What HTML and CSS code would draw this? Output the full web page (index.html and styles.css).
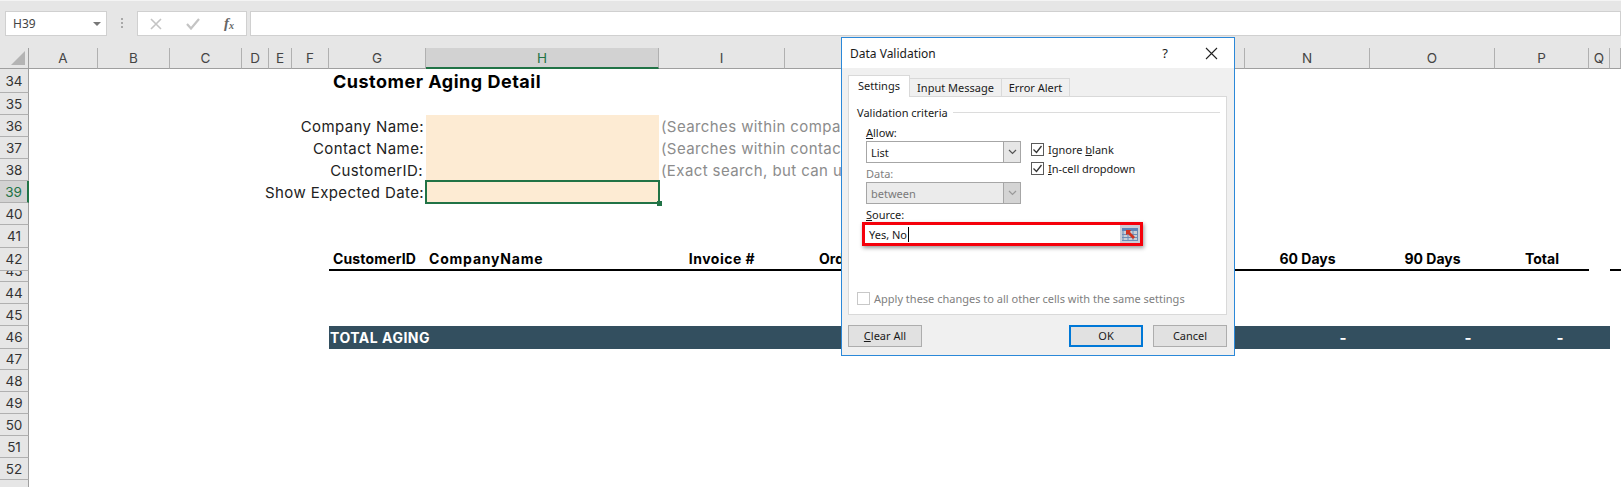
FILE: index.html
```html
<!DOCTYPE html>
<html lang="en">

<head>
    <meta charset="UTF-8">
    <title>Customer Aging Detail</title>
    <link rel="stylesheet" href="styles.css">
</head>

<body>
    <div class="app">
        <div class="formulaBar">
            <div class="nameBox">H39<span class="nameArrow"></span></div>
            <div class="grip"></div>
            <div class="fxBox">
                <svg class="fxIcon" width="12" height="12" viewBox="0 0 12 12"><path d="M1 1 L11 11 M11 1 L1 11" stroke="#c4c4c4" stroke-width="1.6" fill="none" /></svg>
                <svg class="fxIcon" width="14" height="12" viewBox="0 0 14 12"><path d="M1 6 L5 10.5 L13 1" stroke="#c4c4c4" stroke-width="2.2" fill="none" /></svg>
                <span class="fxText">f<sub>x</sub></span>
            </div>
            <div class="formulaInput"></div>
        </div>

        <div class="sheet">
            <div class="corner"><svg width="14" height="14" viewBox="0 0 14 14"><path d="M14 0 V14 H0 Z" fill="#b4b4b4" /></svg></div>
            <div class="ch">A</div>
            <div class="ch">B</div>
            <div class="ch">C</div>
            <div class="ch">D</div>
            <div class="ch">E</div>
            <div class="ch">F</div>
            <div class="ch">G</div>
            <div class="ch chActive">H</div>
            <div class="ch">I</div>
            <div class="ch"></div>
            <div class="ch"></div>
            <div class="ch"></div>
            <div class="ch"></div>
            <div class="ch">N</div>
            <div class="ch">O</div>
            <div class="ch">P</div>
            <div class="ch">Q</div>
            <div class="ch"></div>

            <div class="rh">34</div>
            <div class="rh">35</div>
            <div class="rh">36</div>
            <div class="rh">37</div>
            <div class="rh">38</div>
            <div class="rh rhActive">39</div>
            <div class="rh">40</div>
            <div class="rh">41</div>
            <div class="rh">42</div>
            <div class="rh rhShort">43</div>
            <div class="rh">44</div>
            <div class="rh">45</div>
            <div class="rh">46</div>
            <div class="rh">47</div>
            <div class="rh">48</div>
            <div class="rh">49</div>
            <div class="rh">50</div>
            <div class="rh">51</div>
            <div class="rh">52</div>
            <div class="rh rhLast"></div>

            <div class="title">Customer Aging Detail</div>

            <div class="label row36">Company Name:</div>
            <div class="label row37">Contact Name:</div>
            <div class="label row38 labelId">CustomerID:</div>
            <div class="label row39">Show Expected Date:</div>

            <div class="entry row36"></div>
            <div class="entry row37"></div>
            <div class="entry row38"></div>
            <div class="entry row39 selected"></div>

            <div class="hint row36">(Searches within company</div>
            <div class="hint row37">(Searches within contact</div>
            <div class="hint row38">(Exact search, but can use</div>

            <div class="rule ruleMain"></div>
            <div class="rule ruleEnd"></div>
            <div class="th colG">CustomerID</div>
            <div class="th colH">CompanyName</div>
            <div class="th colI center">Invoice #</div>
            <div class="th colJ">Order Date</div>
            <div class="th colN center">60 Days</div>
            <div class="th colO center">90 Days</div>
            <div class="th colP center">Total</div>

            <div class="totalBar">TOTAL AGING</div>
            <div class="dash colN">-</div>
            <div class="dash colO">-</div>
            <div class="dash colP">-</div>
        </div>

        <div class="dialog">
            <div class="dialogTitle">
                <span class="dialogName">Data Validation</span>
                <span class="help">?</span>
                <svg class="close" width="13" height="13" viewBox="0 0 13 13"><path d="M1 1 L12 12 M12 1 L1 12" stroke="#222" stroke-width="1.1" fill="none" /></svg>
            </div>
            <div class="dialogBody">
                <div class="tabs">
                    <div class="tab tabActive">Settings</div>
                    <div class="tab tabInput">Input Message</div>
                    <div class="tab tabError">Error Alert</div>
                </div>
                <div class="panel">
                    <div class="group"><span>Validation criteria</span><i></i></div>
                    <div class="allowRow">
                        <div class="allowCol">
                            <div class="fieldLabel"><u>A</u>llow:</div>
                            <div class="combo">
                                <span>List</span>
                                <b class="comboBtn"><svg width="9" height="6" viewBox="0 0 9 6"><path d="M1 1 L4.5 4.5 L8 1" stroke="#555" stroke-width="1.2" fill="none" /></svg></b>
                            </div>
                            <div class="fieldLabel muted dataLabel">Data:</div>
                            <div class="combo comboOff">
                                <span>between</span>
                                <b class="comboBtn"><svg width="9" height="6" viewBox="0 0 9 6"><path d="M1 1 L4.5 4.5 L8 1" stroke="#999" stroke-width="1.2" fill="none" /></svg></b>
                            </div>
                        </div>
                        <div class="checks">
                            <div class="check"><span class="box"><svg width="11" height="11" viewBox="0 0 11 11"><path d="M1.5 5.5 L4.5 8.5 L9.5 2" stroke="#333" stroke-width="1.3" fill="none" /></svg></span><span>Ignore <u>b</u>lank</span></div>
                            <div class="check"><span class="box"><svg width="11" height="11" viewBox="0 0 11 11"><path d="M1.5 5.5 L4.5 8.5 L9.5 2" stroke="#333" stroke-width="1.3" fill="none" /></svg></span><span><u>I</u>n-cell dropdown</span></div>
                        </div>
                    </div>
                    <div class="fieldLabel sourceLabel"><u>S</u>ource:</div>
                    <div class="redBox">
                        <div class="sourceInput">
                            <span class="sourceText">Yes, No</span>
                            <b class="rangeBtn">
                                <svg width="16" height="13" viewBox="0 0 16 13">
                                    <path d="M0 0 H16 V3 H0 Z" fill="#5f86b8" />
                                    <path d="M0 6.5 H16 M0 9.5 H16 M0 12.5 H16 M1 3 V13 M6 3 V13 M11 3 V13 M15.5 3 V13" stroke="#6d8db5" stroke-width="1" fill="none" />
                                    <path d="M4 2 L9 2 L8 4 L13 9 L11 11 L6 6 L4 7 Z" fill="#d1331f" />
                                </svg>
                            </b>
                        </div>
                    </div>
                    <div class="check applyCheck"><span class="box boxOff"></span><span>Apply these changes to all other cells with the same settings</span></div>
                </div>
                <div class="buttons">
                    <div class="btn"><u>C</u>lear All</div>
                    <div class="btn btnOk">OK</div>
                    <div class="btn">Cancel</div>
                </div>
            </div>
        </div>
    </div>
</body>

</html>
```

FILE: styles.css
```css
:root {
    --headerBg: #e6e6e6;
    --headerLine: #b0b0b0;
    --green: #217346;
    --navy: #334f5f;
    --sheetFont: Inter, 'Liberation Sans', sans-serif;
    --dialogFont: 'Noto Sans', 'Liberation Sans', sans-serif;
}

html,
body {
    margin: 0;
    background-color: #ffffff;
}

.app {
    position: relative;
    width: 1621px;
    height: 487px;
    overflow: hidden;
}

/* formula bar */
.formulaBar {
    display: flex;
    box-sizing: border-box;
    height: 48px;
    padding: 10px 0 12px 5px;
    background-color: var(--headerBg);
    border-top: 1px solid #f4f4f4;
}

.nameBox,
.fxBox,
.formulaInput {
    box-sizing: border-box;
    height: 25px;
    background-color: #ffffff;
    border: 1px solid #d0d0d0;
}

.nameBox {
    display: flex;
    align-items: center;
    justify-content: space-between;
    width: 102px;
    padding: 0 5px 0 7px;
    font: 12px var(--dialogFont);
    color: #444444;
}

.nameArrow {
    width: 0;
    height: 0;
    border-left: 4px solid transparent;
    border-right: 4px solid transparent;
    border-top: 4px solid #777777;
}

.grip {
    width: 2px;
    height: 12px;
    margin: 7px 14px 0 14px;
    background-image: linear-gradient(#a8a8a8 50%, transparent 50%);
    background-size: 2px 4px;
}

.fxBox {
    display: flex;
    align-items: center;
    width: 110px;
    padding: 0 12px;
    gap: 24px;
}

.fxText {
    font: italic bold 15px 'Liberation Serif', serif;
    color: #666666;
}

.fxText sub {
    font-size: 10px;
    vertical-align: -1px;
    line-height: 0;
}

.formulaInput {
    flex: 1;
    margin-left: 3px;
}

/* grid */
.sheet {
    display: grid;
    grid-template-columns: 29px 69px 72px 72px 27px 23px 37px 97px 233px 126px 115px 115px 115px 115px 125px 125px 94px 21px 11px;
    grid-template-rows: 21px 24px 22px 22px 22px 22px 22px 22px 23px 23px 11px 22px 22px 23px 21px 22px 22px 22px 22px 22px 22px;
    height: 439px;
    font-family: var(--sheetFont);
    font-size: 15px;
    letter-spacing: 0.4px;
    color: #222222;
}

.corner {
    grid-area: 1 / 1;
    display: flex;
    justify-content: flex-end;
    padding: 3px 3px 0 0;
    background-color: var(--headerBg);
    border-bottom: 1px solid #9f9f9f;
    border-right: 1px solid #9f9f9f;
}

.ch {
    grid-row: 1;
    display: flex;
    align-items: center;
    justify-content: center;
    box-sizing: border-box;
    background-color: var(--headerBg);
    border-bottom: 1px solid #9f9f9f;
    border-right: 1px solid var(--headerLine);
    font-size: 13.5px;
    letter-spacing: 0;
    color: #444444;
}

.chActive {
    background-color: #d2d2d2;
    border-bottom: 2px solid var(--green);
    color: var(--green);
}

.rh {
    grid-column: 1;
    display: flex;
    align-items: center;
    justify-content: center;
    overflow: hidden;
    box-sizing: border-box;
    background-color: var(--headerBg);
    border-bottom: 1px solid var(--headerLine);
    border-right: 1px solid #9f9f9f;
    font-size: 13.5px;
    letter-spacing: 0;
    color: #333333;
}

.rhActive {
    background-color: #d2d2d2;
    border-right: 2px solid var(--green);
    color: var(--green);
}

/* row 43 is shorter than its number */
.rhShort {
    align-items: flex-end;
    padding-bottom: 2px;
    line-height: 16px;
}

.rhLast {
    border-bottom: none;
}

.title {
    grid-area: 2 / 8 / 3 / 11;
    align-self: center;
    padding: 1px 0 0 4px;
    font-size: 18px;
    font-weight: 700;
    letter-spacing: 0.5px;
    color: #000000;
}

.row36 {
    grid-row: 4;
}

.row37 {
    grid-row: 5;
}

.row38 {
    grid-row: 6;
}

.row39 {
    grid-row: 7;
}

.label {
    grid-column: 5 / 9;
    align-self: center;
    justify-self: end;
    padding-right: 2px;
}

.labelId {
    padding-right: 3px;
}

.entry {
    grid-column: 9;
    background-color: #fdebd3;
}

.selected {
    position: relative;
    box-sizing: border-box;
    margin: -1px;
    border: 2px solid var(--green);
}

.selected::after {
    content: '';
    position: absolute;
    right: -4px;
    bottom: -4px;
    width: 5px;
    height: 5px;
    background-color: var(--green);
}

.hint {
    grid-column: 10 / 13;
    align-self: center;
    padding-left: 2px;
    color: #8c8c8c;
}

.rule {
    grid-row: 10;
    border-bottom: 2px solid #000000;
}

.ruleMain {
    grid-column: 8 / 18;
}

.ruleEnd {
    grid-column: 19;
}

.th {
    grid-row: 10;
    align-self: center;
    padding-bottom: 3px;
    font-size: 14px;
    font-weight: 700;
    letter-spacing: 0;
    color: #000000;
}

.center {
    text-align: center;
}

.colG {
    grid-column: 8;
    padding-left: 4px;
    letter-spacing: 0.15px;
}

.colH {
    grid-column: 9;
    padding-left: 3px;
    letter-spacing: 0.8px;
}

.colI {
    grid-column: 10;
    letter-spacing: 0.5px;
}

.colJ {
    grid-column: 11 / 13;
    padding-left: 34px;
}

.colN {
    grid-column: 15;
}

.colO {
    grid-column: 16;
}

.colP {
    grid-column: 17;
}

.totalBar {
    grid-area: 14 / 8 / 15 / 19;
    display: flex;
    align-items: center;
    padding-left: 1px;
    background-color: var(--navy);
    font-size: 14px;
    font-weight: 700;
    letter-spacing: 0.5px;
    color: #ffffff;
}

.dash {
    grid-row: 14;
    align-self: center;
    justify-self: end;
    padding-right: 23px;
    font-weight: 700;
    color: #ffffff;
}

.dash.colP {
    padding-right: 25px;
}

/* dialog */
.dialog {
    position: absolute;
    top: 37px;
    left: 841px;
    box-sizing: border-box;
    width: 394px;
    height: 319px;
    border: 1px solid #2b88d8;
    background-color: #f0f0f0;
    font: 11px var(--dialogFont);
    color: #1a1a1a;
}

.dialogTitle {
    display: flex;
    align-items: center;
    height: 30px;
    padding: 0 16px 0 8px;
    background-color: #ffffff;
    font-size: 12px;
}

.dialogName {
    flex: 1;
}

.help {
    margin-right: 37px;
    font-size: 13px;
}

.dialogBody {
    padding: 7px 7px 0 6px;
}

.tabs {
    display: flex;
    align-items: flex-end;
    height: 21px;
}

.tab {
    box-sizing: border-box;
    height: 18px;
    padding-top: 1px;
    border: 1px solid #d9d9d9;
    border-bottom: none;
    text-align: center;
}

.tabActive {
    position: relative;
    z-index: 1;
    width: 62px;
    height: 22px;
    margin-bottom: -1px;
    padding-top: 2px;
    background-color: #ffffff;
}

.tabInput {
    width: 92px;
    border-left: none;
}

.tabError {
    width: 68px;
    border-left: none;
}

.panel {
    box-sizing: border-box;
    height: 219px;
    padding: 8px 6px 0 8px;
    background-color: #ffffff;
    border: 1px solid #d9d9d9;
}

.group {
    display: flex;
    align-items: center;
    gap: 5px;
}

.group i {
    flex: 1;
    height: 1px;
    background-color: #dcdcdc;
}

.allowRow {
    display: flex;
    gap: 10px;
    margin-top: 5px;
    padding-left: 9px;
}

.allowCol {
    width: 155px;
}

.fieldLabel {
    height: 15px;
    line-height: 15px;
}

.muted {
    color: #808080;
}

.dataLabel {
    margin-top: 3px;
}

.combo {
    display: flex;
    align-items: center;
    justify-content: space-between;
    box-sizing: border-box;
    height: 22px;
    margin-top: 1px;
    padding-left: 4px;
    border: 1px solid #a6a6a6;
    background-color: #ffffff;
}

.comboBtn {
    display: flex;
    align-items: center;
    justify-content: center;
    align-self: stretch;
    width: 16px;
    background-color: #e6e6e6;
    border-left: 1px solid #a6a6a6;
}

.comboOff {
    background-color: #ebebeb;
    color: #7a7a7a;
}

.comboOff .comboBtn {
    background-color: #d4d4d4;
}

.checks {
    display: flex;
    flex-direction: column;
    gap: 6px;
    padding-top: 18px;
}

.check {
    display: flex;
    align-items: center;
    gap: 4px;
    height: 13px;
}

.box {
    display: block;
    box-sizing: border-box;
    width: 13px;
    height: 13px;
    border: 1px solid #5a5a5a;
    background-color: #ffffff;
}

.box svg {
    display: block;
}

.boxOff {
    border-color: #c8c8c8;
}

.sourceLabel {
    margin-top: 3px;
    padding-left: 9px;
}

.redBox {
    box-sizing: border-box;
    width: 281px;
    height: 24px;
    margin: 0 0 0 5px;
    border: 3px solid #f5000a;
    box-shadow: 1px 2px 4px rgba(0, 0, 0, 0.4);
    background-color: #ffffff;
}

.sourceInput {
    display: flex;
    align-items: center;
    justify-content: space-between;
    height: 100%;
    padding-left: 4px;
}

.sourceText {
    padding-right: 1px;
    border-right: 1px solid #000000;
}

.rangeBtn {
    display: flex;
    align-items: center;
    justify-content: center;
    align-self: stretch;
    width: 20px;
    background-color: #c9ced6;
}

.applyCheck {
    margin-top: 46px;
    color: #808080;
}

.buttons {
    display: flex;
    gap: 10px;
    margin-top: 10px;
}

.btn {
    box-sizing: border-box;
    width: 74px;
    height: 22px;
    line-height: 20px;
    text-align: center;
    background-color: #e1e1e1;
    border: 1px solid #adadad;
}

.btn:first-child {
    margin-right: auto;
}

.btnOk {
    line-height: 18px;
    border: 2px solid #0078d7;
}
```
